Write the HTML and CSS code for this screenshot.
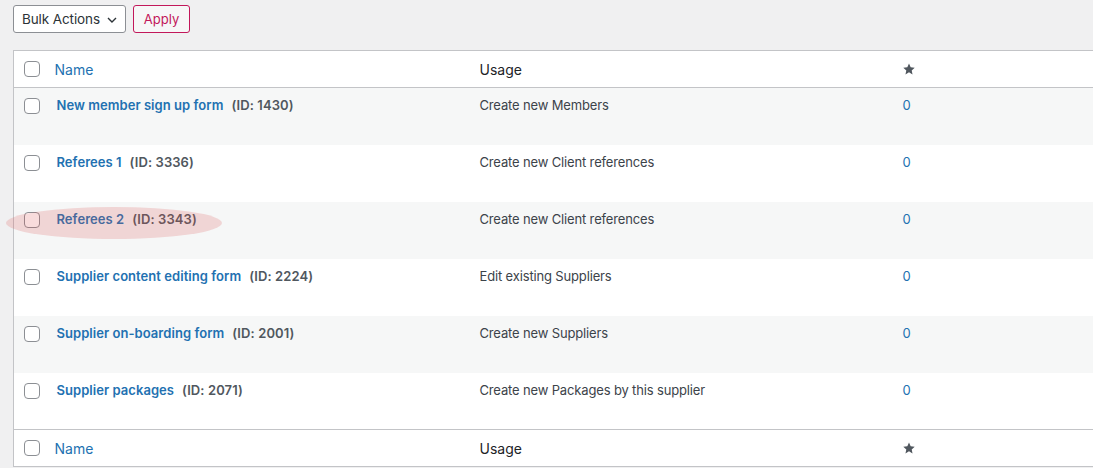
FILE: index.html
```html
<!DOCTYPE html>
<html lang="en">
<head>
<meta charset="utf-8">
<title>Forms</title>
<link rel="stylesheet" href="styles.css">
</head>
<body>
<div class="wrap">
  <div class="tablenav">
    <div class="select">
      <span>Bulk Actions</span>
      <svg class="chev" width="10" height="6" viewBox="0 0 10 6"><path d="M1 1l4 4 4-4" fill="none" stroke="#2c3338" stroke-width="1.4"/></svg>
    </div>
    <button class="btn-apply">Apply</button>
  </div>

  <table class="list">
    <colgroup>
      <col class="c-check"><col class="c-name"><col class="c-usage"><col class="c-star">
    </colgroup>
    <thead>
      <tr>
        <th class="check"><span class="cb"></span></th>
        <th><a class="sort">Name</a></th>
        <th>Usage</th>
        <th><svg class="star" width="12" height="12" viewBox="0 0 20 20"><path d="M10 1l2.8 6.2 6.7.7-5 4.5 1.4 6.6L10 15.6 4.1 19l1.4-6.6-5-4.5 6.7-.7z" fill="#50575e"/></svg></th>
      </tr>
    </thead>
    <tbody>
      <tr class="alt">
        <td class="check"><span class="cb"></span></td>
        <td><a class="title">New member sign up form</a><span class="id">(ID: 1430)</span></td>
        <td>Create new Members</td>
        <td><a class="count">0</a></td>
      </tr>
      <tr>
        <td class="check"><span class="cb"></span></td>
        <td><a class="title">Referees 1</a><span class="id">(ID: 3336)</span></td>
        <td>Create new Client references</td>
        <td><a class="count">0</a></td>
      </tr>
      <tr class="alt">
        <td class="check"><span class="cb"></span></td>
        <td><a class="title">Referees 2</a><span class="id">(ID: 3343)</span></td>
        <td>Create new Client references</td>
        <td><a class="count">0</a></td>
      </tr>
      <tr>
        <td class="check"><span class="cb"></span></td>
        <td><a class="title">Supplier content editing form</a><span class="id">(ID: 2224)</span></td>
        <td>Edit existing Suppliers</td>
        <td><a class="count">0</a></td>
      </tr>
      <tr class="alt">
        <td class="check"><span class="cb"></span></td>
        <td><a class="title">Supplier on-boarding form</a><span class="id">(ID: 2001)</span></td>
        <td>Create new Suppliers</td>
        <td><a class="count">0</a></td>
      </tr>
      <tr>
        <td class="check"><span class="cb"></span></td>
        <td><a class="title">Supplier packages</a><span class="id">(ID: 2071)</span></td>
        <td>Create new Packages by this supplier</td>
        <td><a class="count">0</a></td>
      </tr>
    </tbody>
    <tfoot>
      <tr>
        <th class="check"><span class="cb"></span></th>
        <th><a class="sort">Name</a></th>
        <th>Usage</th>
        <th><svg class="star" width="12" height="12" viewBox="0 0 20 20"><path d="M10 1l2.8 6.2 6.7.7-5 4.5 1.4 6.6L10 15.6 4.1 19l1.4-6.6-5-4.5 6.7-.7z" fill="#50575e"/></svg></th>
      </tr>
    </tfoot>
  </table>

  <div class="mark"></div>
</div>
</body>
</html>
```

FILE: styles.css
```css
html, body {
  margin: 0;
  padding: 0;
  background: #f0f0f1;
  overflow: hidden;
}

body {
  font-family: Inter, "Liberation Sans", Arial, sans-serif;
  font-size: 13px;
  line-height: 1.5;
  color: #3c434a;
}

.wrap {
  position: relative;
  padding: 5px 0 0 13px;
}

/* toolbar above the table */
.tablenav {
  display: flex;
  gap: 7px;
  height: 28px;
  margin-bottom: 17px;
}

.select {
  box-sizing: border-box;
  width: 113px;
  height: 28px;
  border: 1px solid #8c8f94;
  border-radius: 3px;
  background: #fff;
  display: flex;
  align-items: center;
  justify-content: space-between;
  padding: 0 8px 0 8px;
  font-size: 13.5px;
  letter-spacing: -0.1px;
  color: #2c3338;
}

.chev { margin-top: 1px; flex: none; }

.btn-apply {
  box-sizing: border-box;
  height: 28px;
  width: 57px;
  padding: 0;
  border: 1px solid #c2185b;
  border-radius: 3px;
  background: #f6f7f7;
  color: #c2185b;
  font-family: inherit;
  font-size: 13px;
}

/* list table */
.list {
  table-layout: fixed;
  border-collapse: collapse;
  width: 1110px;
  background: #fff;
  border: 1px solid #c3c4c7;
}

.c-check { width: 31px; }
.c-name { width: 425px; }
.c-usage { width: 423px; }

.list th {
  height: 37px;
  box-sizing: border-box;
  padding: 0 10px;
  text-align: left;
  font-weight: 400;
  font-size: 14px;
  color: #1d2327;
  vertical-align: middle;
}

.list thead tr { border-bottom: 1px solid #c3c4c7; }
.list tfoot tr { border-top: 1px solid #c3c4c7; }

.list th.check,
.list td.check {
  padding: 0 0 0 10px;
}

.list td.check { padding-top: 10px; }

.list tbody tr { height: 57px; }
.list tbody tr.alt { background: #f6f7f7; }

.list td {
  vertical-align: top;
  padding: 8px 10px 0;
  color: #3c434a;
  letter-spacing: -0.15px;
}

.list td.check { letter-spacing: 0; }

.cb {
  display: block;
  box-sizing: border-box;
  width: 16px;
  height: 16px;
  border: 1px solid #8c8f94;
  border-radius: 4px;
  background: #fff;
}

.sort {
  color: #2271b1;
  text-decoration: none;
}

.star {
  display: block;
  margin-top: -1px;
}

.title {
  font-weight: 600;
  color: #2271b1;
  margin-left: 2px;
  margin-right: 8px;
  letter-spacing: 0.05px;
}

.id {
  font-weight: 600;
  color: #50575e;
  letter-spacing: 0.1px;
}

.count {
  color: #2271b1;
}

/* highlighted row annotation */
.mark {
  position: absolute;
  left: 6px;
  top: 207px;
  width: 216px;
  height: 32px;
  border-radius: 50%;
  background: rgba(220, 80, 80, 0.2);
  pointer-events: none;
}
```
